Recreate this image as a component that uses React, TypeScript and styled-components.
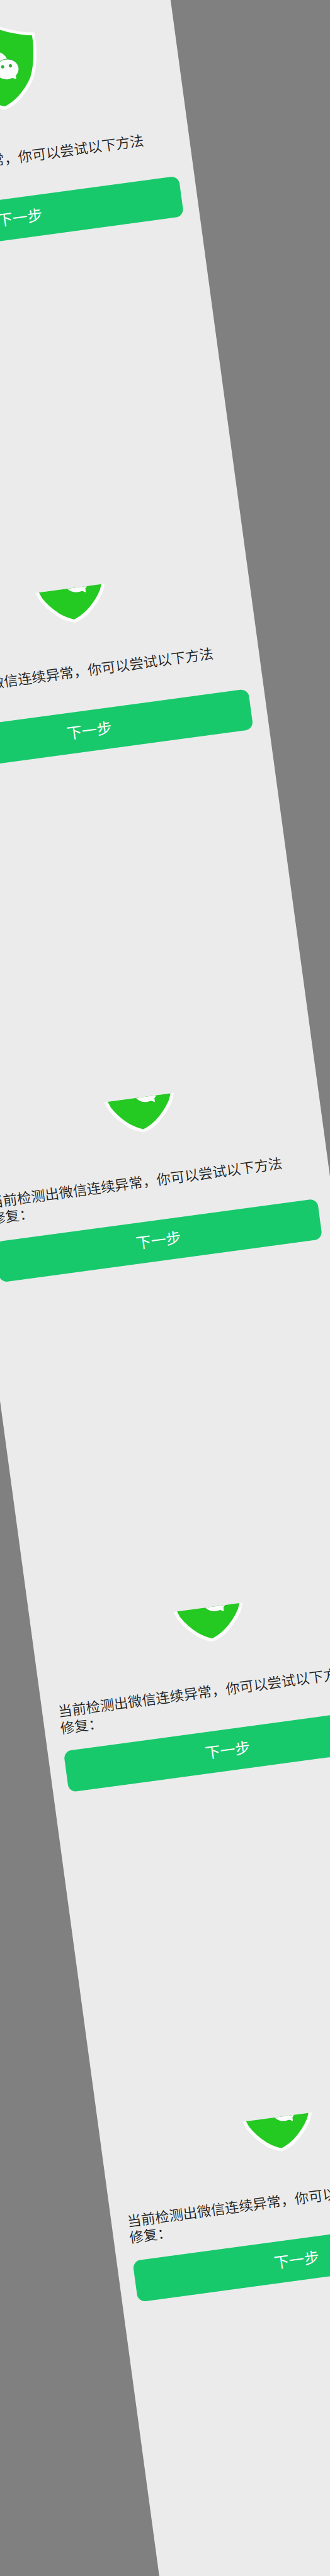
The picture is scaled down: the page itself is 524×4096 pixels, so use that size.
import React from "react";
import styled, { createGlobalStyle } from "styled-components";

const GlobalStyle = createGlobalStyle`
  html, body { margin: 0; padding: 0; background: #808080; }
  * { box-sizing: border-box; }
`;

const Backdrop = styled.main`
  width: 524px;
  height: 4096px;
  overflow: hidden;
  background: #808080;
  font-family: "Noto Sans CJK SC", sans-serif;
`;

const Sheet = styled.div`
  display: flex;
  flex-direction: column;
  width: 567.2px;
  height: 4300px;
  background: #ebebeb;
  transform-origin: 0 0;
  transform: translate(-299.9px, 10.3px) rotate(-7.705deg);
`;

const Screen = styled.section<{ $first?: boolean }>`
  flex: none;
  height: ${(p) => (p.$first ? "971.6px" : "817.8px")};
  overflow: hidden;
`;

const Content = styled.div<{ $first?: boolean }>`
  display: flex;
  flex-direction: column;
  padding: 0 25.2px;
  margin-top: ${(p) => (p.$first ? "64.8px" : "-83.8px")};
`;

const Shield = styled.svg`
  display: block;
  align-self: center;
  width: 132.9px;
  height: 142.4px;
`;

const Message = styled.p`
  margin: 59.7px 0 25.9px;
  font-size: 22.36px;
  font-weight: 350;
  line-height: 26.05px;
  color: #222;
  white-space: nowrap;
`;

const NextButton = styled.button`
  display: flex;
  align-items: center;
  justify-content: center;
  height: 65.6px;
  padding: 0 0 2.6px;
  border: 0;
  border-radius: 12.5px;
  background: #18c96c;
  color: #fff;
  font-family: inherit;
  font-size: 24px;
  line-height: 30px;
`;

function ShieldLogo() {
  return (
    <Shield viewBox="343 55 210 225" aria-hidden="true">
      <path
        d="M448 57 C476 73 508 86 547 91.500 Q549 125 544.500 153 Q541 181 527.800 209.500 Q512 236 480.300 261.500 Q465 271 448 275.500 Q431 271 415.700 261.500 Q384 236 368.200 209.500 Q355 181 351.500 153 Q347 125 349 91.500 C388 86 420 73 448 57Z"
        fill="#fbfcfb"
        stroke="#dedede"
        strokeWidth="0.6"
      />
      <path
        d="M448 67 C476 82 508 93 539.500 98.500 Q541 120 537 141 Q534 173 521.400 202 Q507 227 482.300 247.500 Q466 260 448 266.500 Q430 260 413.700 247.500 Q389 227 374.600 202 Q362 173 359 141 Q355 120 356.500 98.500 C388 93 420 82 448 67Z"
        fill="#24c922"
      />
      <ellipse cx="436" cy="153" rx="33.500" ry="27" fill="#fcfcfc" />
      <path d="M416 170 L412 186 L430 177Z" fill="#fcfcfc" />
      <circle cx="425" cy="144" r="4.200" fill="#24c922" />
      <circle cx="444" cy="144" r="4.200" fill="#24c922" />
      <ellipse cx="466" cy="174.500" rx="30" ry="26" fill="#2fb33c" />
      <ellipse cx="466" cy="174.800" rx="29" ry="25" fill="#fcfcfc" />
      <path d="M474 197.500 Q480 199 485.600 203 L486 193Z" fill="#fcfcfc" />
      <circle cx="456" cy="167" r="4.100" fill="#2fae3a" />
      <circle cx="475.600" cy="167" r="4.100" fill="#2fae3a" />
    </Shield>
  );
}

function RepairScreen({ first }: { first?: boolean }) {
  return (
    <Screen $first={first}>
      <Content $first={first}>
        <ShieldLogo />
        <Message>
          当前检测出微信连续异常，你可以尝试以下方法
          <br />
          修复：
        </Message>
        <NextButton type="button">下一步</NextButton>
      </Content>
    </Screen>
  );
}

export default function App() {
  return (
    <>
      <GlobalStyle />
      <Backdrop>
        <Sheet>
          {[0, 1, 2, 3, 4].map((n) => (
            <RepairScreen key={n} first={n === 0} />
          ))}
        </Sheet>
      </Backdrop>
    </>
  );
}
